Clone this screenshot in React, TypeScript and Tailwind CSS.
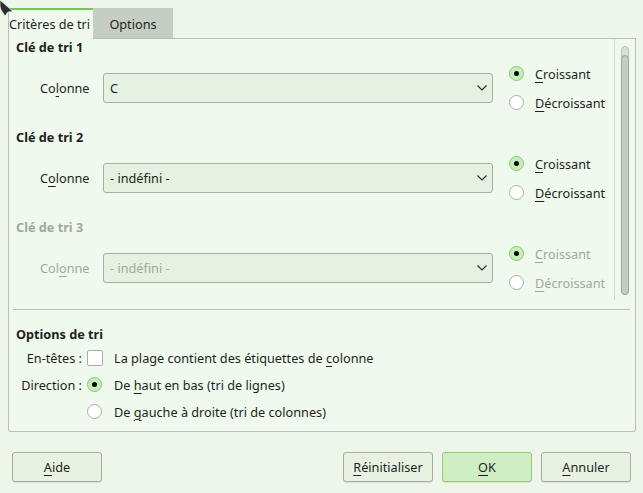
import React from 'react';

const dark = 'text-[#1f1f1f]';
const gray = 'text-[#a2a8a0]';

// text with one underlined mnemonic letter
const Mn = ({ text, at }: { text: string; at: number }) => (
  <>
    {text.slice(0, at)}
    <span className="underline decoration-1 underline-offset-[3px]">{text[at]}</span>
    {text.slice(at + 1)}
  </>
);

const Radio = ({ checked }: { checked?: boolean }) => (
  <span
    className={`flex h-[15px] w-[15px] shrink-0 items-center justify-center rounded-full border ${
      checked ? 'border-[#86cc6c] bg-[#c9ecbb]' : 'border-[#a9afa7] bg-white'
    }`}
  >
    {checked && <span className="h-[5px] w-[5px] rounded-full bg-black" />}
  </span>
);

const Chevron = () => (
  <svg width="10" height="6" viewBox="0 0 10 6" className="shrink-0">
    <polyline points="0.5,0.5 5,5 9.5,0.5" fill="none" stroke="#2a2a2a" strokeWidth="1.1" />
  </svg>
);

interface SortKeyProps {
  n: number;
  value: string;
  mnAt: number;
  disabled?: boolean;
}

const SortKey = ({ n, value, mnAt, disabled }: SortKeyProps) => {
  const tc = disabled ? gray : dark;
  return (
    <div className="h-[90px] shrink-0">
      <div className={`h-[16px] pl-[7px] font-bold leading-[16px] ${tc}`}>Clé de tri {n}</div>
      <div className="mt-[18px] flex h-[30px] items-center">
        <span className={`ml-[31px] w-[63px] shrink-0 ${tc}`}>
          <Mn text="Colonne" at={mnAt} />
        </span>
        <div
          className={`flex h-[30px] w-[390px] shrink-0 items-center justify-between rounded-[3px] border border-[#a8aea6] bg-[#e5f1e1] pl-[6px] pr-[5px] ${tc}`}
        >
          <span>{value}</span>
          <Chevron />
        </div>
        <div className="ml-[16px] flex flex-col">
          <div className="flex h-[29px] items-center gap-[11px]">
            <Radio checked />
            <span className={tc}>
              <Mn text="Croissant" at={0} />
            </span>
          </div>
          <div className="flex h-[29px] items-center gap-[11px]">
            <Radio />
            <span className={tc}>
              <Mn text="Décroissant" at={0} />
            </span>
          </div>
        </div>
      </div>
    </div>
  );
};

const Button = ({ children, primary }: { children: React.ReactNode; primary?: boolean }) => (
  <button
    className={`flex h-[30px] w-[90px] items-center justify-center rounded-[3px] border shadow-[0_1px_0_rgba(0,0,0,0.08)] ${dark} ${
      primary ? 'border-[#8fd077] bg-[#d0eec4]' : 'border-[#a6aca4] bg-[#e7f2e3]'
    }`}
  >
    {children}
  </button>
);

export default function App() {
  return (
    <div
      className={`relative h-[493px] w-[643px] overflow-hidden bg-[#edf6e9] text-[12.7px] leading-[18px] ${dark}`}
      style={{ fontFamily: '"Noto Sans", "Open Sans", sans-serif' }}
    >
      {/* tabs */}
      <div className="flex pl-[8px] pr-[7px] pt-[8px]">
        <div className="h-[31px] w-[85px] whitespace-nowrap border-l border-t-2 border-l-[#b9beb6] border-t-[#6fcb4f] bg-[#f0f9ed] pt-[5px]">
          Critères de tri
        </div>
        <div className="flex h-[31px] w-[80px] items-center justify-center border-b border-[#b9beb6] bg-[#c6cec3] pt-[1px]">
          Options
        </div>
        <div className="h-[31px] flex-1 border-b border-[#b9beb6]" />
      </div>

      {/* panel */}
      <div className="mx-[8px] mr-[7px] flex h-[393px] flex-col rounded-b-[3px] border border-t-0 border-[#b9beb6] bg-[#f0f9ed]">
        <div className="flex h-[261px] shrink-0 overflow-hidden">
          <div className="flex w-[605px] shrink-0 flex-col">
            <SortKey n={1} value="C" mnAt={2} />
            <SortKey n={2} value="- indéfini -" mnAt={1} />
            <SortKey n={3} value="- indéfini -" mnAt={3} disabled />
          </div>
          <div className="flex-1 border-l border-[#d3dbd0] pl-[6px] pt-[7px]">
            <div className="h-[249px] w-[8px] rounded-full border border-[#b8beb5] bg-[#d9e1d6] pt-[8px]">
              <div className="-mx-px h-[240px] rounded-full border border-[#9ea59b] bg-[#c5ccc2]" />
            </div>
          </div>
        </div>

        <div className="ml-[4px] mr-[5px] mt-[9px] h-px bg-[#b9beb6]" />

        <div className="mt-[16px] h-[16px] pl-[7px] font-bold leading-[16px]">Options de tri</div>
        <div className="mt-[2px] flex flex-col">
          <div className="flex h-[27px] items-center">
            <span className="w-[73px] shrink-0 text-right">En-têtes :</span>
            <span className="ml-[5px] h-[16px] w-[16px] shrink-0 rounded-[2px] border border-[#a9afa7] bg-white" />
            <span className="ml-[11px]">
              La plage contient des étiquettes de <Mn text="colonne" at={0} />
            </span>
          </div>
          <div className="flex h-[27px] items-center">
            <span className="w-[73px] shrink-0 text-right">Direction :</span>
            <span className="ml-[5px]">
              <Radio checked />
            </span>
            <span className="ml-[12px]">
              De <Mn text="haut" at={0} /> en bas (tri de lignes)
            </span>
          </div>
          <div className="flex h-[27px] items-center">
            <span className="w-[73px] shrink-0" />
            <span className="ml-[5px]">
              <Radio />
            </span>
            <span className="ml-[12px]">
              De <Mn text="gauche" at={0} /> à droite (tri de colonnes)
            </span>
          </div>
        </div>
      </div>

      {/* buttons */}
      <div className="mt-[20px] flex justify-between px-[12px]">
        <Button>
          <Mn text="Aide" at={0} />
        </Button>
        <div className="flex gap-[9px]">
          <Button>
            <Mn text="Réinitialiser" at={0} />
          </Button>
          <Button primary>
            <Mn text="OK" at={0} />
          </Button>
          <Button>
            <Mn text="Annuler" at={0} />
          </Button>
        </div>
      </div>

      {/* mouse pointer */}
      <svg className="absolute left-0 top-0" width="16" height="18" viewBox="0 0 16 18">
        <polygon points="0,0 13,11.5 8,12 5,16 1,10 0,6" fill="#2d2d2d" stroke="#f2f2f2" strokeWidth="0.7" />
      </svg>
    </div>
  );
}
